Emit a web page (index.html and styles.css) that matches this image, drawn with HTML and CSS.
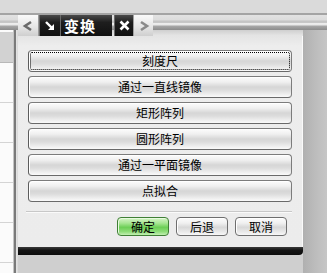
FILE: index.html
```html
<!DOCTYPE html>
<html>
<head>
<meta charset="utf-8">
<title>变换</title>
<link rel="stylesheet" href="styles.css">
</head>
<body>
<div class="top"></div>
<div class="main">
	<div class="list">
		<div class="list_head"></div>
		<div class="list_row"></div>
		<div class="list_row"></div>
		<div class="list_row"></div>
		<div class="list_row"></div>
		<div class="list_row"></div>
	</div>
	<div class="divider"></div>
	<div class="panel">
		<div class="tabs">
			<div class="tab light">
				<svg width="12" height="12" viewBox="0 0 12 12"><path d="M9 2 L3 6 L9 10" fill="none" stroke="#6a6a6a" stroke-width="2.6"/></svg>
			</div>
			<div class="tab dark">
				<svg width="12" height="12" viewBox="0 0 12 12"><path d="M2 2 L8 8" stroke="#fff" stroke-width="2.4"/><path d="M4 10 L10 10 L10 4 Z" fill="#fff"/></svg>
			</div>
			<div class="tab dark title">变换</div>
			<div class="tab dark close">
				<svg width="11" height="11" viewBox="0 0 11 11"><path d="M1.5 1.5 L9.5 9.5 M9.5 1.5 L1.5 9.5" stroke="#fff" stroke-width="2.6"/></svg>
			</div>
			<div class="tab light">
				<svg width="12" height="12" viewBox="0 0 12 12"><path d="M3 2 L9 6 L3 10" fill="none" stroke="#8a8a8a" stroke-width="2.6"/></svg>
			</div>
		</div>
		<div class="body">
			<div class="cmds">
				<div class="cmd focus"><span>刻度尺</span></div>
				<div class="cmd"><span>通过一直线镜像</span></div>
				<div class="cmd"><span>矩形阵列</span></div>
				<div class="cmd"><span>圆形阵列</span></div>
				<div class="cmd"><span>通过一平面镜像</span></div>
				<div class="cmd"><span>点拟合</span></div>
			</div>
			<div class="sep"></div>
			<div class="actions">
				<div class="btn ok">确定</div>
				<div class="btn">后退</div>
				<div class="btn">取消</div>
			</div>
		</div>
		<div class="bar"></div>
		<div class="under"></div>
	</div>
	<div class="shade"></div>
</div>
</body>
</html>
```

FILE: styles.css
```css
html, body { margin: 0; padding: 0; }
body {
	width: 327px;
	height: 273px;
	overflow: hidden;
	background: #d8d8d8;
	font-family: "Noto Sans CJK SC", "Noto Sans", sans-serif;
}

.top {
	height: 30px;
	background: linear-gradient(to bottom,
		#dadada 0, #dadada 13px,
		#a4a4a4 13px, #a4a4a4 15px,
		#e2e2e2 15px, #dcdcdc 20px,
		#c4c4c4 21px, #c8c8c8 23px,
		#eeeeee 23px, #e8e8e8 25px,
		#a8a8a8 26px, #8c8c8c 30px);
}

.main { display: flex; height: 243px; }

.list { width: 13px; background: #fbfbfb; }
.list_head { height: 30px; margin-top: 2px; background: #d2d2d2; border-bottom: 1px solid #b8b8b8; }
.list_row { height: 39px; border-bottom: 1px solid #d4d4d4; }

.divider {
	width: 5px;
	background: linear-gradient(to right, #c4c4c4 0, #c4c4c4 1px, #7a7a7a 1px, #7a7a7a 3px, #e4e4e4 3px, #d8d8d8 5px);
}

.panel { width: 285px; display: flex; flex-direction: column; }

.tabs {
	display: flex;
	height: 21px;
	margin-top: -15px;
	background: linear-gradient(to bottom, transparent 0, transparent 15px, #cfcfcf 15px, #e6e6e6 21px);
}
.tab { display: flex; align-items: center; justify-content: center; height: 21px; }
.tab.light {
	width: 21px;
	background: linear-gradient(to bottom, #fafafa, #e4e4e4 60%, #cfcfcf);
	border-right: 1px solid #9a9a9a;
	box-sizing: border-box;
}
.tab.dark {
	width: 21px;
	background: linear-gradient(to bottom, #4a4a4a, #1e1e1e 35%, #101010);
	border-left: 1px solid #6a6a6a;
	box-sizing: border-box;
}
.tab.title {
	width: 52px;
	color: #fff;
	font-size: 15px;
	font-weight: bold;
	justify-content: flex-start;
	padding-left: 3px;
	letter-spacing: 1px;
}
.tab.close { width: 19px; margin-left: 2px; }
.tab.light:last-child { width: 20px; border-right: 0; border-left: 1px solid #a0a0a0; }

.body {
	flex: 1;
	background: linear-gradient(to bottom, #e4e4e4 0, #ededed 10px, #ececec);
	border-right: 1px solid #fafafa;
	padding: 14px 10px 0 10px;
}

.cmds { display: flex; flex-direction: column; gap: 4px; }
.cmd {
	height: 22px;
	box-sizing: border-box;
	border: 1px solid #7c7c7c;
	border-left-color: #5c5c5c;
	border-bottom-color: #6a6a6a;
	border-radius: 4px;
	background: linear-gradient(to bottom, #fcfcfc 0, #f0f0f0 25%, #d6d6d6 50%, #dcdcdc 65%, #f2f2f2 90%, #fafafa);
	box-shadow: inset 1px 1px 0 #ffffff;
	display: flex;
	align-items: center;
	justify-content: center;
	font-size: 12px;
	color: #000;
	line-height: 1;
}
.cmd.focus { position: relative; }
.cmd.focus::after {
	content: "";
	position: absolute;
	left: 1px; top: 1px; right: 1px; bottom: 1px;
	border: 1px dotted #000;
	border-radius: 2px;
}

.sep { height: 1px; margin: 9px 0 0 -2px; background: #c8c8c8; border-bottom: 1px solid #fafafa; }

.actions { display: flex; justify-content: flex-end; gap: 7px; padding: 4px 5px 0 0; }
.btn {
	width: 52px;
	height: 19px;
	box-sizing: border-box;
	border: 1px solid #6e6e6e;
	border-radius: 4px;
	background: linear-gradient(to bottom, #fcfcfc 0, #f0f0f0 30%, #d8d8d8 55%, #ececec 85%, #f8f8f8);
	box-shadow: inset 1px 1px 0 #ffffff;
	display: flex;
	align-items: center;
	justify-content: center;
	font-size: 12px;
	line-height: 1;
	color: #000;
}
.btn.ok {
	border-color: #3f7f35;
	background: linear-gradient(to bottom, #d6f4c8 0, #a8e694 30%, #6ccf56 55%, #8edc78 80%, #c2efb2);
	box-shadow: inset 1px 1px 0 #e8fadf;
}

.bar {
	height: 8px;
	background: linear-gradient(to bottom, #3a3a3a, #141414 40%, #0c0c0c);
	border-bottom-right-radius: 4px;
}
.under { height: 18px; background: #cfcfcf; }

.shade {
	flex: 1;
	background: linear-gradient(to right, #b0b0b0, #bcbcbc 50%, #c6c6c6);
}
```
